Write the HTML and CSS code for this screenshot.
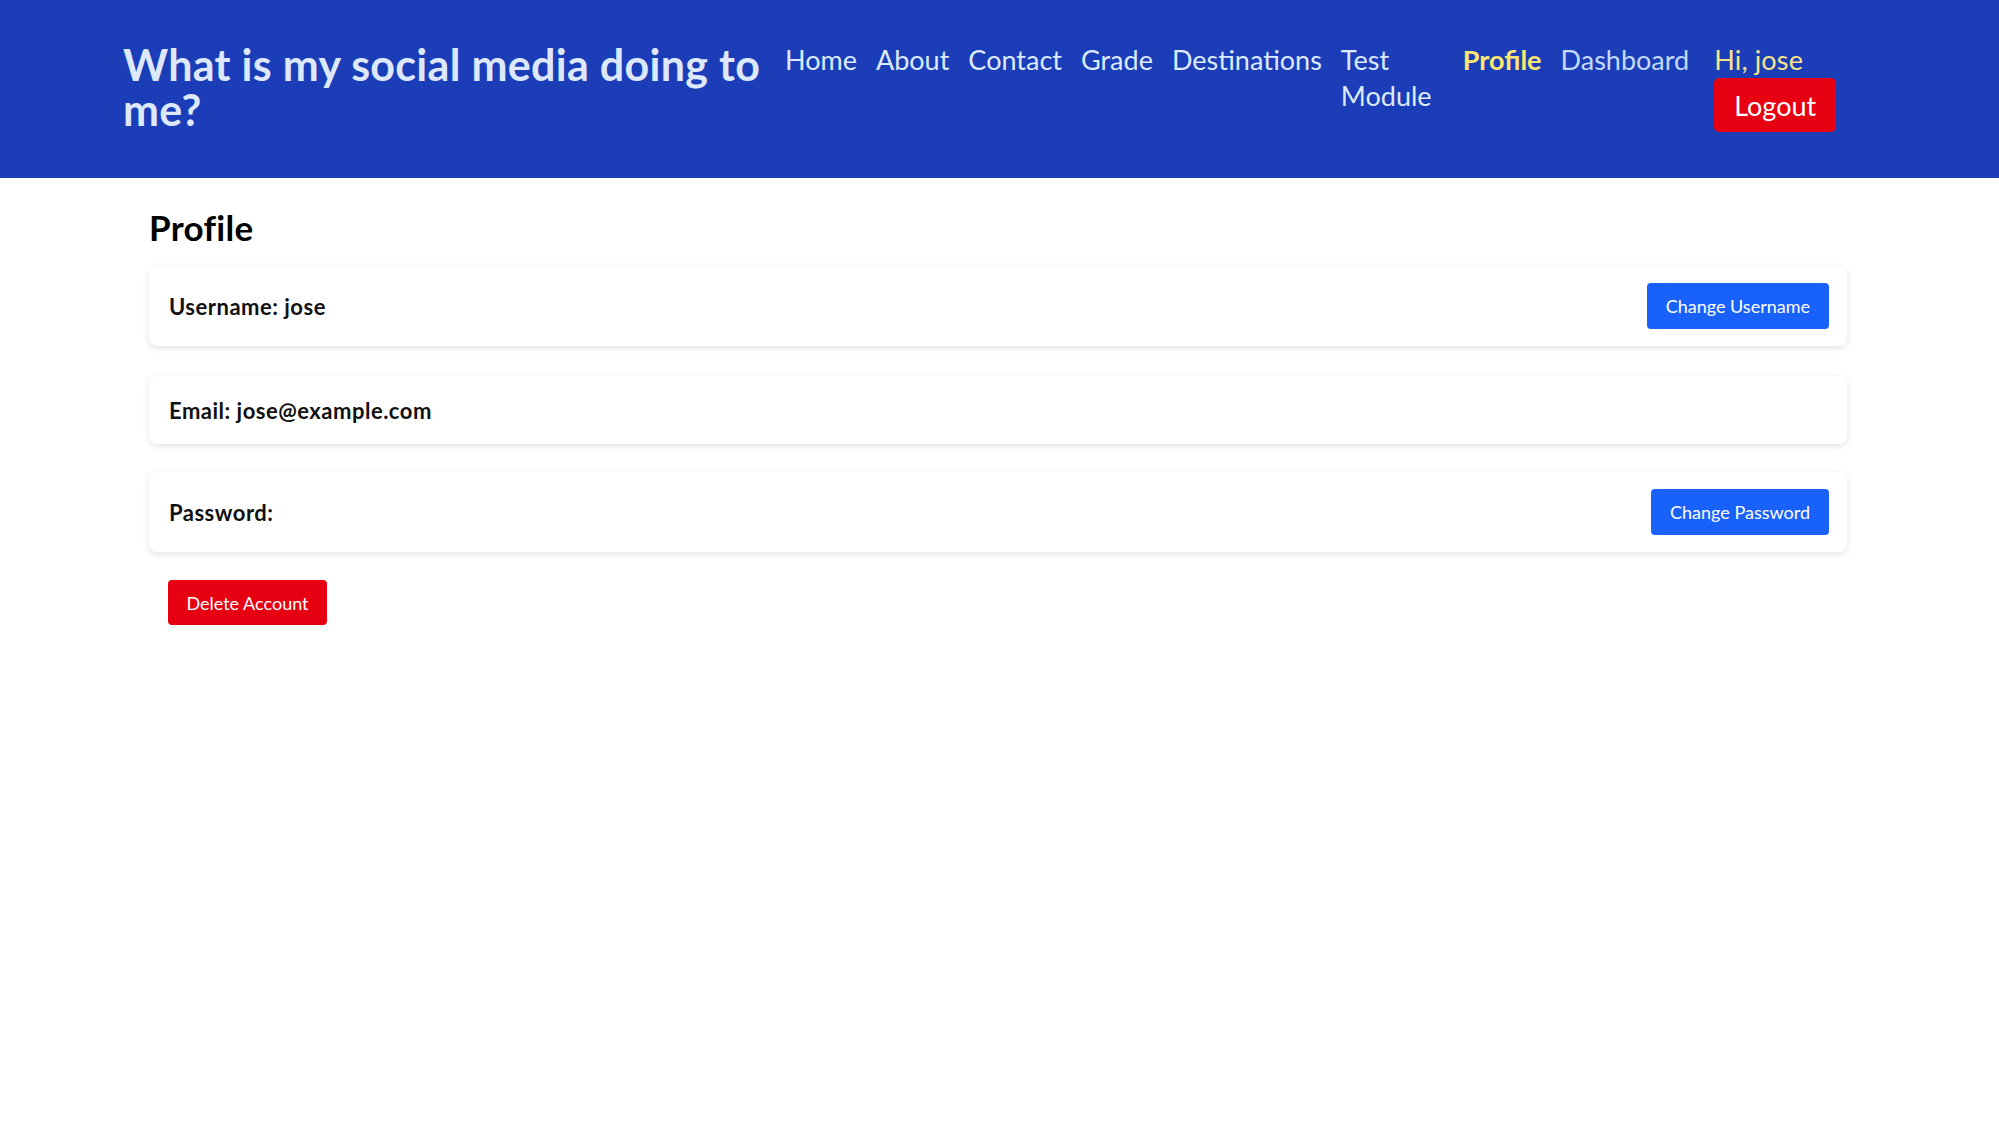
FILE: index.html
```html
<!DOCTYPE html>
<html lang="en">
<head>
<meta charset="utf-8">
<title>Profile</title>
<link rel="stylesheet" href="styles.css">
</head>
<body>
<header class="site-header">
  <h1 class="site-title">What is my social media doing to me?</h1>
  <nav class="nav">
    <a class="nav-link" href="#">Home</a>
    <a class="nav-link" href="#">About</a>
    <a class="nav-link" href="#">Contact</a>
    <a class="nav-link" href="#">Grade</a>
    <a class="nav-link" href="#">Destinations</a>
    <a class="nav-link nav-wrap" href="#">Test Module</a>
    <a class="nav-link nav-active" href="#">Profile</a>
    <a class="nav-link nav-dash" href="#">Dashboard</a>
    <div class="user-box">
      <span class="greeting">Hi, jose</span>
      <button class="btn-logout">Logout</button>
    </div>
  </nav>
</header>
<main class="content">
  <h2 class="page-title">Profile</h2>
  <div class="card card-first">
    <span class="card-label">Username: jose</span>
    <button class="btn-blue">Change Username</button>
  </div>
  <div class="card card-short">
    <span class="card-label">Email: jose@example.com</span>
  </div>
  <div class="card">
    <span class="card-label">Password:</span>
    <button class="btn-blue">Change Password</button>
  </div>
  <div class="danger-row">
    <button class="btn-delete">Delete Account</button>
  </div>
</main>
</body>
</html>
```
FILE: styles.css
```css
* { box-sizing: border-box; }
html, body { margin: 0; padding: 0; }
body {
  font-family: Lato, "Open Sans", "Noto Sans", sans-serif;
  background: #ffffff;
  color: #000;
}
button { font-family: inherit; cursor: pointer; border: none; }

.site-header {
  background: #1b3db8;
  height: 178px;
  padding: 42px 0 0 123px;
  display: flex;
  align-items: flex-start;
}
.site-title {
  margin: 0;
  width: 650px;
  font-size: 43px;
  line-height: 45px;
  font-weight: 700;
  letter-spacing: 0.3px;
  color: #dde8fd;
}
.nav {
  display: flex;
  align-items: flex-start;
  gap: 19px;
  margin-left: 12px;
}
.nav-link {
  font-size: 27px;
  line-height: 36px;
  color: #dbeafe;
  text-decoration: none;
}
.nav-wrap { width: 103px; }
.nav-active { color: #fce66f; font-weight: 700; }
.nav-dash { color: #c3dafd; }
.user-box {
  display: flex;
  flex-direction: column;
  align-items: flex-start;
  margin-left: 6px;
}
.greeting {
  font-size: 27px;
  line-height: 36px;
  letter-spacing: 0.15px;
  color: #f5e38b;
}
.btn-logout {
  width: 122px;
  height: 54px;
  background: #e60012;
  color: #fff;
  font-size: 27px;
  border-radius: 5px;
  padding: 0;
}

.content {
  width: 1698px;
  margin-left: 149px;
  padding-top: 29px;
}
.page-title {
  margin: 0 0 19px 0;
  font-size: 35px;
  line-height: 40px;
  font-weight: 700;
  letter-spacing: 0.3px;
}
.card {
  background: #fff;
  border-radius: 8px;
  box-shadow: 0 2px 6px rgba(0, 0, 0, 0.12);
  height: 80px;
  padding: 0 18px 0 20px;
  display: flex;
  align-items: center;
  justify-content: space-between;
  margin-bottom: 28px;
}
.card-first { margin-bottom: 30px; }
.card-short { height: 68px; }
.card-label {
  font-size: 22px;
  font-weight: 700;
  letter-spacing: 0.5px;
  color: #111;
}
.btn-blue {
  height: 46px;
  padding: 0 19px;
  background: #1862fb;
  color: #fff;
  font-size: 18px;
  border-radius: 4px;
}
.danger-row {
  padding-left: 19px;
}
.btn-delete {
  height: 45px;
  width: 159px;
  background: #e60012;
  color: #fff;
  font-size: 18px;
  border-radius: 4px;
  padding: 0;
}
```
